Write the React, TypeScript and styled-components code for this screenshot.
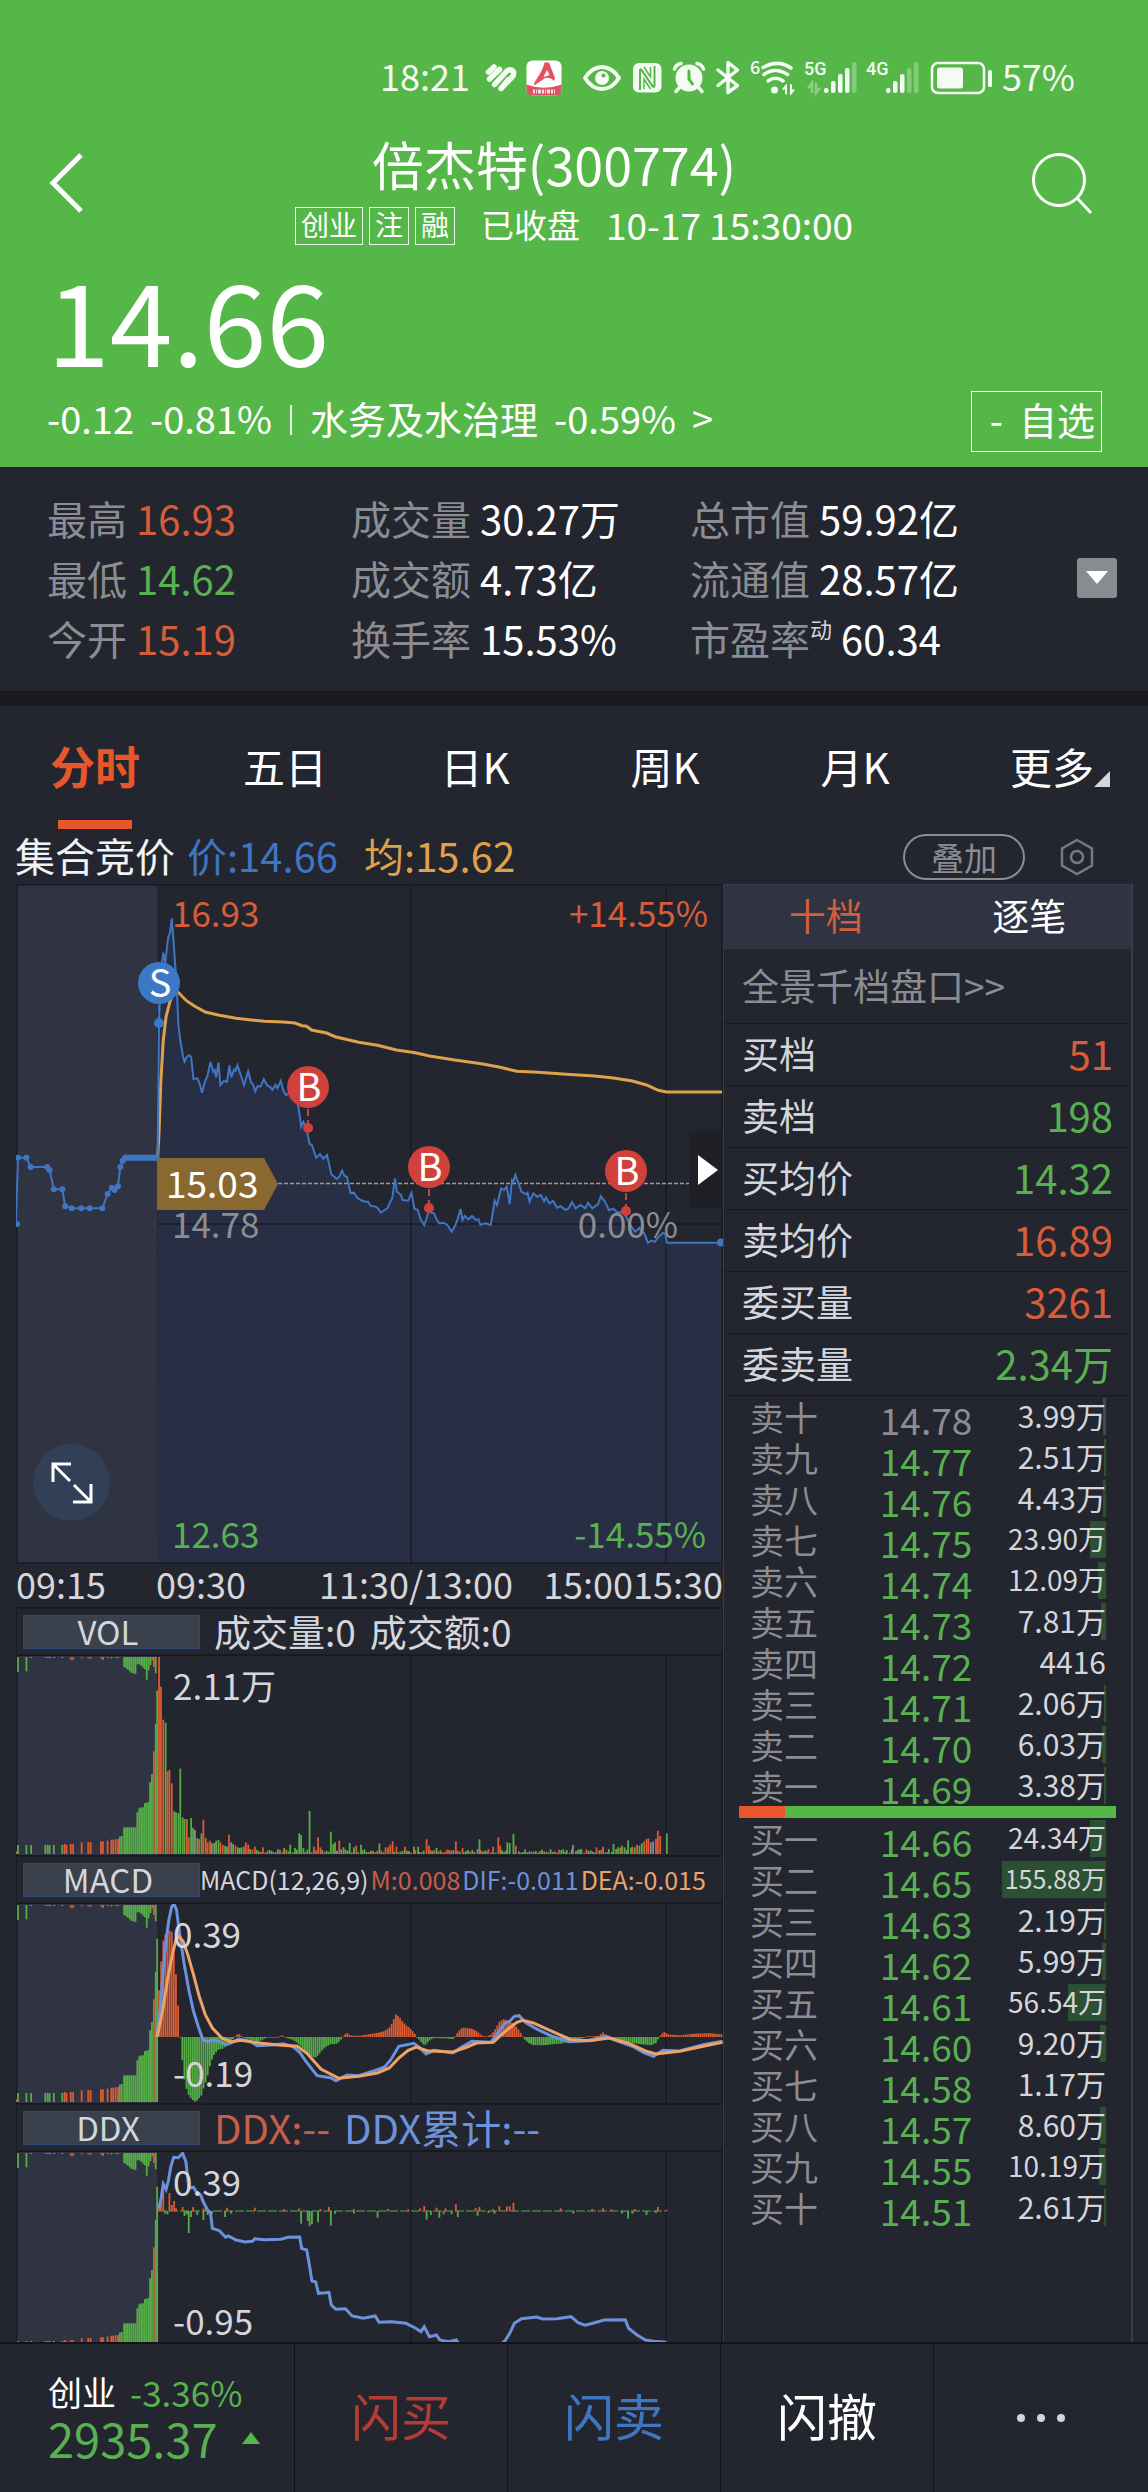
import React from "react";
import styled, { createGlobalStyle, css } from "styled-components";

const color = {
  green: "#55b748",
  page: "#23252f",
  band: "#1a1b1f",
  panel: "#303341",
  line: "#191b24",
  edge: "#3a3c49",
  up: "#d65d38",
  down: "#58b050",
  accent: "#e8572a",
  muted: "#8b8d93",
  soft: "#d4d6dc",
  blue: "#3f76c2",
  gold: "#dfa24c",
  dif: "#6c92dc",
  dea: "#eda368",
  mred: "#c45f48",
};

const font = `"Noto Sans CJK SC", "Noto Sans", sans-serif`;

const GlobalStyle = createGlobalStyle`
  * { box-sizing: border-box; }
  body { margin: 0; background: ${color.page}; color: #fff; font-family: ${font}; }
  button, table { font: inherit; color: inherit; }
  button { background: none; border: 0; padding: 0; margin: 0; cursor: pointer; }
  dl, dd, h1, p { margin: 0; font-weight: 400; }
  a { color: inherit; text-decoration: none; }
  svg { display: block; flex: none; overflow: visible; }
`;

/* ---------- header ---------- */

const Header = styled.header`
  background: ${color.green};
  padding: 60px 0 15px;
`;
const StatusBar = styled.div`
  display: flex;
  justify-content: flex-end;
  align-items: center;
  gap: 10px;
  height: 36px;
  padding-right: 73px;
  color: #f4fbf2;
`;
const StatusText = styled.span`
  padding-bottom: 6px;
  font-size: 36px;
  line-height: 30px;
`;
const IconGroup = styled.span`
  display: flex;
  gap: 8px;
  margin: 0 10px 0 4px;
`;
const NavBar = styled.div`
  display: grid;
  grid-template-columns: 76px 1fr 69px;
  align-items: start;
  margin-top: 38px;
  padding: 0 56px 0 49px;
`;
const NavTitle = styled.div`
  display: flex;
  flex-direction: column;
  align-items: center;
  gap: 13px;
`;
const Title = styled.h1`
  padding-right: 40px;
  font-size: 52px;
  line-height: 60px;
`;
const SubRow = styled.div`
  display: flex;
  align-items: flex-start;
  height: 38px;
  font-size: 33px;
  line-height: 34px;
  white-space: pre;
`;
const Tag = styled.span`
  height: 38px;
  padding: 0 5px;
  margin-right: 6px;
  border: 1px solid #eef8ec;
  font-size: 28px;
  line-height: 32px;
`;
const State = styled.span`
  margin: 0 26px 0 20px;
`;
const Stamp = styled.time`
  font-size: 37px;
`;
const NavButton = styled.button<{ $end?: boolean }>`
  margin-top: 19px;
  justify-self: ${(p) => (p.$end ? "end" : "start")};
`;
const Price = styled.p`
  margin-top: 13px;
  padding-left: 47px;
  font-size: 113px;
  line-height: 120px;
`;
const QuoteRow = styled.div`
  display: flex;
  align-items: flex-start;
  justify-content: space-between;
  margin-top: 13px;
  padding: 0 46px 0 47px;
  font-size: 38px;
  line-height: 54px;
`;
const Quote = styled.a`
  display: flex;
  gap: 16px;
`;
const Bar = styled.span`
  width: 2px;
  height: 30px;
  margin: 14px 2px 0;
  background: #e9f6e7;
`;
const FavButton = styled.button`
  display: flex;
  gap: 16px;
  height: 61px;
  padding: 0 6px 0 18px;
  border: 1px solid #fff;
  font-size: 38px;
  line-height: 54px;
`;

/* ---------- figures ---------- */

const Stats = styled.section`
  display: grid;
  grid-template-columns: 304fr 339fr 387fr 40px;
  align-items: center;
  padding: 21px 31px 23px 47px;
  font-size: 40px;
  line-height: 60px;
`;
const StatList = styled.dl`
  display: flex;
  flex-direction: column;
`;
const Stat = styled.div`
  display: flex;
  gap: 9px;
  height: 60px;
`;
const StatName = styled.dt`
  color: ${color.muted};
`;
const StatValue = styled.dd<{ $tone?: string }>`
  color: ${(p) => p.$tone ?? "#fff"};
`;
const Sup = styled.sup`
  font-size: 22px;
  line-height: 22px;
  vertical-align: 17px;
  color: ${color.soft};
`;
const ExpandButton = styled.button`
  display: grid;
  place-items: center;
  width: 40px;
  height: 40px;
  border-radius: 3px;
  background: #878d8f;
`;
const Band = styled.div`
  height: 15px;
  background: ${color.band};
`;

/* ---------- period tabs ---------- */

const Tabs = styled.nav`
  display: grid;
  grid-template-columns: repeat(6, 1fr);
  height: 123px;
  padding-right: 8px;
`;
const Tab = styled.button<{ $active?: boolean; $more?: boolean }>`
  display: grid;
  grid-template-rows: 1fr 9px;
  justify-items: center;
  align-items: center;
  padding-top: 6px;
  font-size: 42px;
  line-height: 60px;
  ${(p) => p.$more && css`padding-left: 30px;`}
  ${(p) =>
    p.$active &&
    css`
      font-size: 45px;
      font-weight: 700;
      color: ${color.accent};
      &::after {
        content: "";
        width: 74px;
        height: 9px;
        background: ${color.accent};
      }
    `}
`;
const MoreLabel = styled.span`
  display: flex;
  align-items: flex-end;
`;
const Corner = styled.svg`
  margin-bottom: 9px;
`;

const InfoRow = styled.div`
  display: flex;
  align-items: center;
  height: 55px;
  padding: 0 54px 0 15px;
`;
const InfoItem = styled.span<{ $tone?: string; $gap: number }>`
  padding-bottom: 4px;
  color: ${(p) => p.$tone ?? "#f2f3f5"};
  margin-right: ${(p) => p.$gap}px;
  font-size: 40px;
  line-height: 46px;
`;
const OverlayButton = styled.button`
  width: 122px;
  height: 46px;
  margin: 0 35px 0 auto;
  border: 2px solid ${color.muted};
  border-radius: 23px;
  color: ${color.muted};
  font-size: 33px;
  line-height: 38px;
`;

/* ---------- charts ---------- */

const Board = styled.main`
  display: grid;
  grid-template-columns: 707fr 410fr;
  padding: 0 15px 0 16px;
`;
const ChartColumn = styled.section`
  min-width: 0;
`;
const ChartBox = styled.div`
  position: relative;
`;
const Plot = styled.svg`
  width: 100%;
  height: auto;
  font-family: ${font};
  overflow: hidden;
`;
const FullButton = styled.button`
  position: absolute;
  left: 17px;
  bottom: 43px;
  display: grid;
  place-items: center;
  width: 77px;
  height: 77px;
  border-radius: 50%;
  background: #314057;
`;
const NextButton = styled.button`
  position: absolute;
  right: 0;
  top: 247px;
  display: grid;
  place-items: center;
  width: 34px;
  height: 77px;
  padding-left: 4px;
  background: #1e2026;
`;
const Axis = styled.div`
  display: grid;
  grid-template-columns: 140fr 163fr 220fr 184fr;
  height: 43px;
  color: ${color.soft};
  font-size: 36px;
  line-height: 39px;
  white-space: nowrap;
`;
const AxisEnd = styled.span`
  display: flex;
  justify-content: flex-end;
`;
const IndicatorHead = styled.div`
  display: flex;
  align-items: center;
  height: 49px;
  padding-left: 6px;
  border: solid ${color.line};
  border-width: 2px 1px;
  color: ${color.soft};
  white-space: nowrap;
`;
const IndicatorButton = styled.button`
  width: 177px;
  height: 34px;
  padding: 0 7px 2px 0;
  border: 1px solid #2f4677;
  background: #3a404c;
  color: ${color.soft};
  font-size: 33px;
  line-height: 26px;
`;
const Readout = styled.span<{ $size: number; $tone?: string; $left?: number }>`
  padding-bottom: 2px;
  font-size: ${(p) => p.$size}px;
  line-height: 38px;
  margin-left: ${(p) => p.$left ?? 0}px;
  color: ${(p) => p.$tone ?? color.soft};
`;

/* ---------- order book ---------- */

const Book = styled.aside`
  min-width: 0;
  border: solid ${color.edge};
  border-width: 1px 2px 0 1px;
`;
const BookTabs = styled.div`
  display: grid;
  grid-template-columns: 1fr 1fr;
  height: 64px;
  background: ${color.panel};
  font-size: 37px;
`;
const BookTab = styled.button<{ $active?: boolean }>`
  padding-bottom: 4px;
  color: ${(p) => (p.$active ? color.up : "#fff")};
  line-height: 60px;
`;
const DepthLink = styled.a`
  display: block;
  height: 75px;
  padding-left: 18px;
  border-bottom: 1px solid ${color.line};
  color: ${color.muted};
  font-size: 37px;
  line-height: 72px;
`;
const SummaryTable = styled.table`
  width: 100%;
  border-collapse: separate;
  border-spacing: 0;
`;
const SummaryName = styled.th`
  height: 62px;
  padding: 0 0 3px 18px;
  border-bottom: 1px solid ${color.line};
  color: ${color.soft};
  font-size: 37px;
  font-weight: 400;
  line-height: 58px;
  text-align: left;
`;
const SummaryValue = styled.td<{ $tone: string }>`
  height: 62px;
  padding: 0 18px 3px 0;
  border-bottom: 1px solid ${color.line};
  color: ${(p) => p.$tone};
  font-size: 40px;
  line-height: 58px;
  text-align: right;
`;
const LevelTable = styled.table`
  width: 100%;
  table-layout: fixed;
  border-collapse: collapse;
`;
const LevelName = styled.th`
  width: 31%;
  padding: 1px 0 0 26px;
  color: ${color.muted};
  font-size: 34px;
  font-weight: 400;
  line-height: 40px;
  text-align: left;
`;
const LevelPrice = styled.td<{ $flat?: boolean }>`
  width: 30%;
  padding: 5px 0 0;
  color: ${(p) => (p.$flat ? color.muted : color.down)};
  font-size: 37px;
  line-height: 36px;
  text-align: right;
`;
const LevelVolume = styled.td<{ $size: number }>`
  position: relative;
  padding: 0 25px 0 0;
  color: ${color.soft};
  font-size: ${(p) => p.$size}px;
  line-height: 39px;
  text-align: right;
  vertical-align: top;
`;
const VolumeText = styled.span`
  position: relative;
`;
const VolumeBar = styled.i<{ $flat?: boolean }>`
  position: absolute;
  top: 2px;
  right: 25px;
  height: 37px;
  background: ${(p) => (p.$flat ? "#454751" : "#2b5034")};
`;
const Ratio = styled.div`
  display: flex;
  height: 12px;
  margin: 0 15px;
  background: ${color.green};
`;
const RatioBuy = styled.div`
  background: ${color.accent};
`;

/* ---------- bottom bar ---------- */

const BottomBar = styled.footer`
  position: relative;
  display: grid;
  grid-template-columns: 295fr 213fr 213fr 213fr 214fr;
  height: 150px;
  margin-top: -9px;
  border-top: 2px solid #12131c;
  background: ${color.page};
`;
const IndexCell = styled.a`
  display: flex;
  flex-direction: column;
  padding: 25px 0 0 48px;
  border-right: 1px solid #12131c;
  color: ${color.down};
`;
const IndexLine = styled.span<{ $big?: boolean }>`
  display: flex;
  align-items: center;
  gap: ${(p) => (p.$big ? 24 : 14)}px;
  font-size: ${(p) => (p.$big ? 47 : 35)}px;
  line-height: 46px;
`;
const IndexName = styled.span`
  color: #fff;
  font-size: 34px;
`;
const Action = styled.button<{ $tone?: string }>`
  display: grid;
  place-items: center;
  padding-bottom: 8px;
  border-right: 1px solid #12131c;
  color: ${(p) => p.$tone ?? "#fff"};
  font-size: 50px;
  line-height: 60px;
  &:last-child { padding-bottom: 0; border-right: 0; }
`;

/* ---------- chart data ---------- */

type Pt = [number, number];
const KX = 2.119;
const KY = 3;

const project = (raw: string, top: number): Pt[] =>
  raw
    .trim()
    .split(/\s+/)
    .map((s) => {
      const [x, y] = s.split(",").map(Number);
      return [x / KX - 16, (y - top) / KY];
    });
const toPath = (pts: Pt[]) => "M" + pts.map(([x, y]) => `${x.toFixed(1)} ${y.toFixed(1)}`).join("L");
const pairs = (raw: string): Pt[] =>
  raw.trim().split(/\s+/).map((s) => s.split(",").map(Number) as Pt);

const preOpen = `38,833 56,833 65,861 100,861 105,870 114,928 132,928 138,979 152,985 172,985 190,985 217,985 228,942 237,923 243,930 250,919 255,861 260,842 265,833 275,833 285,833 295,833 305,833 315,833 325,833 332,833`;
const price = `34,1031 ${preOpen} 334,838 337,430 339,350 342,260 346,218 350,250 356,175 360,160 364,115 368,190 372,270 375,340 378,435 383,490 388,530 391,545 396,530 401,526 405,530 410,597 418,595 423,610 428,638 434,605 439,590 446,546 452,575 455,570 458,592 463,548 467,615 474,603 481,605 486,556 490,592 496,568 499,572 503,556 510,585 517,615 526,574 532,608 536,612 541,634 546,618 552,620 559,598 567,618 572,620 577,630 584,614 588,625 595,602 600,630 606,645 612,640 625,645 632,680 636,715 638,740 643,725 650,750 656,792 661,795 670,833 678,823 685,836 693,825 697,850 702,883 714,897 719,890 725,872 730,888 735,890 739,915 743,940 750,938 757,953 765,960 773,965 780,965 786,978 793,979 800,983 807,998 815,990 822,983 826,968 831,955 837,895 841,935 850,945 853,960 865,962 872,938 878,985 885,990 892,1020 899,1035 905,1010 909,985 913,998 920,1000 925,1018 931,1030 940,1028 948,1035 957,1055 965,1035 970,1015 976,987 980,1020 985,1008 993,1018 1000,1008 1008,1020 1014,1018 1018,1035 1028,1030 1040,1035 1048,962 1053,975 1062,925 1068,930 1074,920 1080,972 1085,900 1088,905 1092,885 1100,915 1105,935 1115,943 1118,938 1122,965 1130,940 1138,950 1146,945 1153,963 1157,952 1164,970 1172,963 1180,983 1188,978 1198,990 1205,985 1212,966 1220,985 1230,975 1240,985 1246,968 1255,985 1267,973 1273,948 1282,965 1290,990 1300,986 1308,998 1320,995 1327,1010 1338,1040 1346,1055 1355,1043 1365,1060 1373,1088 1380,1082 1388,1085 1396,1070 1405,1058 1410,1062 1413,1088 1530,1088`;
const average = `334,833 337,760 341,600 346,480 352,410 360,365 370,330 380,340 395,362 412,378 435,396 465,406 500,415 560,424 600,426 625,429 640,437 650,439 660,450 692,459 710,470 760,487 800,496 840,510 880,518 910,528 960,539 1020,551 1060,562 1095,574 1140,577 1200,583 1260,588 1300,594 1340,603 1370,615 1395,631 1412,636 1530,636`;
const difLine = `333,531 340,440 346,330 352,240 358,180 364,140 369,134 374,150 380,215 390,310 400,390 410,455 420,500 430,540 440,546 450,541 460,543 480,555 490,550 505,538 530,545 545,558 575,556 600,552 620,560 635,578 650,608 672,648 690,652 700,654 712,663 735,646 760,648 790,635 815,622 828,600 845,560 877,551 890,565 903,583 920,572 960,580 975,565 1000,545 1040,548 1055,520 1070,490 1080,485 1090,470 1100,468 1115,490 1140,510 1170,530 1205,546 1240,544 1285,530 1310,545 1340,560 1365,580 1385,590 1405,572 1440,574 1490,555 1531,545`;
const deaLine = `333,531 345,450 355,360 365,285 373,240 379,230 388,245 398,285 410,345 422,410 435,465 450,505 470,535 490,547 510,542 550,550 590,556 630,560 650,580 680,628 718,656 760,650 800,640 825,625 845,595 865,572 882,562 905,573 960,577 990,562 1010,550 1045,548 1070,515 1095,488 1108,482 1130,490 1170,515 1210,540 1250,543 1290,535 1330,550 1370,575 1390,583 1440,575 1490,560 1531,548`;
const ddxLine = `337,325 342,290 346,252 352,268 357,240 362,200 368,172 378,173 387,160 394,185 400,265 410,262 416,275 425,285 432,310 440,330 446,340 450,385 465,392 478,412 484,408 500,420 520,426 535,424 540,416 560,419 595,418 610,412 635,411 639,445 650,450 655,490 661,543 669,546 675,580 690,578 697,577 702,615 712,628 732,626 746,648 770,655 795,648 803,667 830,665 860,670 880,684 892,695 899,680 910,710 925,705 932,720 950,725 967,720 975,738 1058,738 1070,722 1080,700 1090,670 1105,656 1138,651 1150,657 1180,656 1210,650 1225,668 1240,676 1260,668 1280,660 1325,659 1332,685 1350,705 1368,720 1385,724 1412,727`;

/* x, height, colour key */
const auctionBars = `34,8,r 38,27,g 56,27,g 66,27,g 96,27,g 101,27,g 105,27,g 114,27,g 132,27,g 137,30,r 141,27,r 150,30,r 155,30,r 173,35,r 187,36,r 192,36,r 214,38,r 218,38,r 228,40,r 236,43,r 240,43,r 245,44,r 250,45,r 254,52,g 258,54,g 263,80,g 267,80,g 271,80,g 275,80,g 279,80,g 283,80,g 287,80,g 291,125,g 295,137,g 299,140,g 303,140,g 307,153,g 311,154,g 315,156,g 318,215,g 322,240,g 326,308,r 330,390,g 333,490,g`;
const auctionTop = `38,45,g 56,43,g 66,3,g 97,3,g 102,3,g 106,3,g 115,3,g 132,3,g 150,9,r 155,9,r 173,4,r 187,4,r 192,5,r 214,4,r 218,9,r 228,3,r 236,4,r 245,3,r 250,3,r 263,30,g 267,34,g 271,38,g 275,43,g 279,48,g 283,49,g 287,51,g 291,22,g 295,22,g 299,26,g 303,32,g 307,37,g 311,68,g 315,40,g 319,24,g 323,10,r 326,30,r 330,49,g`;
const volumeBars = `337,591,r 341,502,r 346,403,r 351,394,g 355,248,r 359,252,r 364,212,r 369,128,g 373,125,g 378,122,g 382,256,g 387,110,g 391,105,g 396,105,r 400,50,r 405,108,g 409,78,g 413,72,n 418,48,g 422,45,r 427,62,g 431,103,r 436,48,r 440,35,r 445,40,r 449,32,g 454,33,n 458,40,g 463,42,g 467,35,r 472,28,r 477,25,g 481,22,g 485,58,r 490,35,n 494,30,g 499,25,r 504,20,g 508,18,g 512,20,g 517,22,r 521,35,r 526,28,r 530,15,g 540,22,r 557,20,r 602,18,g 615,28,g 625,18,g 634,62,g 638,57,g 643,18,g 656,129,g 665,22,r 674,50,r 679,20,r 701,67,g 706,30,g 710,35,g 719,40,r 728,20,g 741,33,g 750,20,g 755,25,r 765,28,g 804,32,g 817,20,r 822,20,r 827,28,r 832,38,r 840,22,r 858,22,r 877,22,g 886,22,g 904,44,r 909,25,r 925,18,g 966,38,r 980,18,r 1012,15,n 1016,44,g 1035,15,r 1045,22,r 1056,50,r 1060,25,r 1075,35,g 1080,33,g 1088,60,g 1093,25,r 1201,12,g 1214,27,n 1232,14,n 1264,20,r 1278,22,r 1290,15,g 1300,30,g 1310,20,g 1318,25,g 1331,41,g 1340,22,r 1345,20,g 1350,28,r 1355,25,g 1360,32,g 1365,38,r 1370,45,r 1374,47,r 1379,35,n 1384,38,n 1390,45,r 1394,70,r 1399,54,r 1413,62,g`;
const macdBars = `337,140 341,220 346,290 351,310 355,315 359,320 364,315 369,270 373,185 378,80 382,-5 387,-80 391,-130 396,-160 400,-175 405,-185 413,-194 418,-190 427,-175 431,-155 436,-135 440,-115 445,-85 449,-68 454,-52 463,-38 472,-35 481,-25 490,-12 495,-5 500,5 505,10 510,6 517,-4 530,-8 548,-14 556,-8 565,-2 590,-2 595,6 600,3 608,-3 620,-8 630,-18 640,-32 650,-45 660,-58 668,-62 674,-55 682,-40 690,-30 700,-22 715,-20 722,-8 728,4 735,12 742,5 760,3 775,7 790,10 805,14 815,18 825,28 832,45 838,68 845,62 852,48 860,36 870,25 878,12 883,0 890,-10 895,-20 900,-25 905,-18 912,-8 920,-3 940,-4 960,-6 966,5 972,18 980,28 1000,25 1010,18 1020,5 1030,1 1042,8 1050,25 1058,45 1066,54 1074,50 1082,45 1090,38 1100,20 1106,5 1112,-8 1120,-18 1130,-24 1150,-25 1170,-22 1190,-20 1205,-12 1215,-8 1235,-3 1245,3 1255,2 1270,4 1278,14 1285,4 1300,-3 1320,-10 1340,-18 1360,-22 1380,-25 1390,-18 1395,-5 1400,6 1408,16 1415,8 1440,5 1470,10 1500,12 1530,8`;
const ddxBars = `337,20 341,50 346,78 359,54 364,18 369,30 373,8 387,12 409,12 431,8 436,10 481,10 540,10 602,6 634,8 679,6 697,12 750,6 822,6 865,5 890,8 899,15 925,10 944,8 966,20 1008,9 1016,12 1045,6 1058,14 1074,14 1080,14 1088,25 1188,8 1255,6 1278,8 1296,5 1345,6 1394,12 1413,4 350,-8 355,-10 391,-15 396,-10 400,-66 405,-18 418,-12 431,-27 440,-12 449,-10 477,-18 490,-8 638,-38 652,-30 656,-45 661,-40 674,-34 701,-44 710,-8 750,-8 800,-20 904,-26 913,-12 931,-20 940,-10 957,-10 970,-18 1012,-14 1035,-6 1048,-8 1215,-8 1318,-8 1331,-23 1340,-8 1370,-12 1390,-6`;

const barFill: Record<string, string> = { g: "#55ad46", r: "#dd5b31", n: "#8b8792" };

const parseBars = (raw: string) =>
  raw.split(/\s+/).map((s) => {
    const [x, h, k] = s.split(",");
    return { x: Number(x), h: Number(h), k };
  });

/* Quiet minutes between the busy ones carry only a few lots. */
const quietMinutes = () => {
  const busy = parseBars(volumeBars);
  const out: { x: number; h: number; k: string }[] = [];
  let seed = 7;
  for (let x = 535; x < 1400; x += 4.48) {
    if (busy.some((b) => Math.abs(b.x - x) < 2.3)) continue;
    seed = (seed * 137 + 59) % 1009;
    const late = x > 1300 ? 6 : 0;
    out.push({ x, h: 4 + (seed % 11) + late, k: seed % 7 === 0 ? "n" : seed % 3 === 0 ? "r" : "g" });
  }
  return out;
};

const interpolate = (raw: string): Pt[] => {
  const pts = pairs(raw);
  const out: Pt[] = [];
  for (let x = 337; x <= 1531; x += 4.48) {
    const i = pts.findIndex((p) => p[0] >= x);
    if (i < 0) break;
    const b = pts[i];
    const a = pts[Math.max(0, i - 1)];
    const t = b[0] === a[0] ? 0 : (x - a[0]) / (b[0] - a[0]);
    out.push([x, a[1] + (b[1] - a[1]) * t]);
  }
  return out;
};

const Bars = ({ items, base, down }: { items: { x: number; h: number; k: string }[]; base: number; down?: boolean }) => (
  <g>
    {items.map((b, i) => (
      <rect
        key={i}
        x={b.x / KX - 16 - 0.9}
        y={down ? base : base - b.h / KY}
        width="1.8"
        height={b.h / KY}
        fill={barFill[b.k]}
      />
    ))}
  </g>
);

const SignedBars = ({ items, base }: { items: Pt[]; base: number }) => (
  <g>
    {items.map(([x, h], i) => (
      <rect
        key={i}
        x={x / KX - 16 - 0.9}
        y={h > 0 ? base - h / KY : base}
        width="1.8"
        height={Math.max(0.7, Math.abs(h) / KY)}
        fill={h > 0 ? barFill.r : barFill.g}
      />
    ))}
  </g>
);

const Grid = ({ height }: { height: number }) => (
  <g stroke={color.line} strokeWidth="1.5">
    <path d={`M395 0V${height}M650 0V${height}M.7 0V${height}M706.3 0V${height}`} />
  </g>
);

const Marker = ({ x, y, dot, letter, fill }: { x: number; y: number; dot: number; letter: string; fill: string }) => (
  <g fill={fill}>
    <path d={`M${x} ${y}V${dot}`} stroke={fill} strokeWidth="2" strokeDasharray="7 4" />
    <circle cx={x} cy={dot} r="5" />
    <circle cx={x} cy={y} r="21" />
    <text x={x + 1} y={y + 14} fill="#fff" fontSize="38" textAnchor="middle">{letter}</text>
  </g>
);

const PriceChart = () => {
  const line = project(price, 12);
  const session = line.slice(line.findIndex(([x]) => x > 141));
  return (
    <Plot viewBox="0 0 707 680" role="img" aria-label="分时走势">
      <rect width="141" height="679" fill={color.panel} />
      <path d={`${toPath(session)}V679H141Z`} fill="#282e44" />
      <Grid height={680} />
      <path d="M0 .7H707M0 679H707M141 340H707" stroke={color.line} strokeWidth="1.5" />
      <path d="M262 299.5H707" stroke="#a39a90" strokeWidth="1.5" strokeDasharray="4 2" />
      <path d={toPath(project(average, 12))} fill="none" stroke={color.gold} strokeWidth="3" />
      <path d={toPath(line)} fill="none" stroke={color.blue} strokeWidth="2" />
      <path d="M109 273.7H141" stroke={color.blue} strokeWidth="6" />
      {project(preOpen, 12).map(([x, y], i) => (
        <circle key={i} cx={x} cy={y} r="3" fill={color.blue} />
      ))}
      <circle cx="1" cy="340" r="3" fill={color.blue} />
      <circle cx="705" cy="358.5" r="4" fill={color.blue} />
      <path d="M141 274H248L262 300L248 326H141Z" fill="#8a6930" />
      <g fontSize="35">
        <text x="156" y="43" fill={color.up}>16.93</text>
        <text x="692" y="43" fill={color.up} textAnchor="end">+14.55%</text>
        <text x="156" y="354" fill={color.muted}>14.78</text>
        <text x="662" y="354" fill={color.muted} textAnchor="end">0.00%</text>
        <text x="156" y="664" fill={color.down}>12.63</text>
        <text x="690" y="664" fill={color.down} textAnchor="end">-14.55%</text>
        <text x="150" y="314" fill="#fff" fontSize="37">15.03</text>
      </g>
      <Marker x={143} y={99} dot={139} letter="S" fill="#3b78c6" />
      <Marker x={292} y={203} dot={244} letter="B" fill="#d1413b" />
      <Marker x={413} y={283} dot={324} letter="B" fill="#d1413b" />
      <Marker x={610} y={287} dot={327} letter="B" fill="#d1413b" />
    </Plot>
  );
};

const IndicatorPlot = ({ label, high, low, children }: { label: string; high: string; low?: string; children: React.ReactNode }) => (
  <Plot viewBox="0 0 707 199" role="img" aria-label={label}>
    <rect width="141" height="199" fill={color.panel} />
    <Grid height={199} />
    <Bars items={parseBars(auctionBars)} base={198} />
    <Bars items={parseBars(auctionTop)} base={1} down />
    {children}
    <g fontSize="35" fill={color.soft}>
      <text x="157" y="44">{high}</text>
      {low && <text x="157" y="183">{low}</text>}
    </g>
  </Plot>
);

/* ---------- status icons ---------- */

const HeartIcon = () => (
  <svg width="34" height="36" viewBox="0 0 34 36" fill="none" stroke="#f4fbf2" strokeWidth="5.500" strokeLinecap="round">
    <path d="M4.500 12L10 7" />
    <path d="M5.500 19L15.500 9.500" />
    <path d="M10.500 24.500L22.500 11.500C27 7 32 12 28.500 16.500L17 28.500L24 20" strokeLinejoin="round" />
  </svg>
);
const AppIcon = () => (
  <svg width="36" height="36" viewBox="0 0 36 36">
    <rect x=".5" y=".5" width="35" height="35" rx="6" fill="#fff" />
    <path d="M.5 24.500Q18 31 35.500 24.500V29.500Q35.500 35.500 29.500 35.500H6.500Q.5 35.500 .5 29.500Z" fill="#e05361" />
    <path d="M18.500 2.500H23L29 18L28 21C24 17 20 17 17 19.500L8 25.500C7 22 16 14 18.500 2.500Z" fill="#e4525e" />
    <path d="M21 10L23.500 15L17.500 17Z" fill="#fff" />
    <path d="M7 31.500H29" stroke="#fff" strokeWidth="4" strokeDasharray="2 1 1 1 3 1" opacity=".8" />
  </svg>
);
const EyeIcon = () => (
  <svg width="40" height="36" viewBox="0 0 40 36" fill="none" stroke="#f4fbf2" strokeWidth="4">
    <path d="M3 18Q10 7 20 7T37 18Q30 29 20 29T3 18Z" strokeLinejoin="round" />
    <circle cx="20" cy="18" r="7" fill="#f4fbf2" stroke="none" />
    <circle cx="21.500" cy="15.500" r="2" fill={color.green} stroke="none" />
  </svg>
);
const NfcIcon = () => (
  <svg width="30" height="36" viewBox="0 0 30 36">
    <rect x="1" y="3" width="28.500" height="29.500" rx="6" fill="#f4fbf2" />
    <path d="M8 30V10.500Q8 8.500 9.500 10L20.500 26Q22.500 28 22.500 25.500V6" fill="none" stroke={color.green} strokeWidth="2" />
    <path d="M12 7L18.500 17V7M12 29V19L18.500 29" fill="none" stroke={color.green} strokeWidth="1.500" />
  </svg>
);
const AlarmIcon = () => (
  <svg width="34" height="36" viewBox="0 0 34 36" fill="none" stroke="#f4fbf2" strokeLinecap="round">
    <circle cx="17" cy="18" r="13.500" fill="#f4fbf2" stroke="none" />
    <path d="M2.500 9Q4 4.500 9 3.500M31.500 9Q30 4.500 25 3.500M7 28L4 31.500M27 28L30 31.500" strokeWidth="3.500" />
    <path d="M17 11V19L20.500 24" stroke={color.green} strokeWidth="3" />
  </svg>
);
const BluetoothIcon = () => (
  <svg width="24" height="36" viewBox="0 0 24 36" fill="none" stroke="#f4fbf2" strokeWidth="3.500" strokeLinejoin="round" strokeLinecap="round">
    <path d="M2 10L21.500 25.500L12 32.500V2.500L21.500 10L2 25.500" />
  </svg>
);
const WifiIcon = () => (
  <svg width="46" height="36" viewBox="0 0 46 36" fill="none" stroke="#f4fbf2" strokeWidth="3.500" strokeLinecap="round">
    <text x="0" y="14" fontSize="18" fontWeight="500" fill="#f4fbf2" stroke="none">6</text>
    <path d="M13 7.500Q28 -1 41 8M14 14.500Q25 6.500 37.500 14.500M18 21Q25.500 15.500 33 21" />
    <circle cx="24.500" cy="30" r="3.500" fill="#f4fbf2" stroke="none" />
    <path d="M36 33.500V26L33.500 29M41 25V33L43.500 30" strokeWidth="2" />
  </svg>
);
const SignalIcon = ({ label, level, arrows }: { label: string; level: number; arrows?: boolean }) => (
  <svg width="52" height="36" viewBox="0 0 52 36">
    <text x="-2" y="15" fontSize="18" fontWeight="500" fill="#f4fbf2" fontFamily="Roboto">{label}</text>
    {arrows && <path d="M6 33V23L2 28M10 23V33L14 28" fill="none" stroke="#8fd085" strokeWidth="2.500" />}
    {[5, 12, 19, 25, 31].map((h, i) => (
      <rect key={h} x={18 + i * 7} y={33 - h} width="4.500" height={h} rx="2" fill={i < level ? "#f4fbf2" : "#85cb7a"} />
    ))}
  </svg>
);
const BatteryIcon = () => (
  <svg width="62" height="36" viewBox="0 0 62 36" fill="none">
    <rect x="2" y="3" width="52" height="30" rx="6" stroke="#f4fbf2" strokeWidth="2.500" />
    <rect x="7" y="7.500" width="26" height="21" rx="2.500" fill="#f4fbf2" />
    <rect x="58" y="10" width="4" height="17" rx="1.500" fill="#f4fbf2" />
  </svg>
);

/* ---------- tables ---------- */

const stats = [
  [
    { name: "最高", value: "16.93", tone: color.up },
    { name: "最低", value: "14.62", tone: color.down },
    { name: "今开", value: "15.19", tone: color.up },
  ],
  [
    { name: "成交量", value: "30.27万" },
    { name: "成交额", value: "4.73亿" },
    { name: "换手率", value: "15.53%" },
  ],
  [
    { name: "总市值", value: "59.92亿" },
    { name: "流通值", value: "28.57亿" },
    { name: "市盈率", sup: "动", value: "60.34" },
  ],
] as { name: string; value: string; tone?: string; sup?: string }[][];

const summary: [string, string, string][] = [
  ["买档", "51", color.up],
  ["卖档", "198", color.down],
  ["买均价", "14.32", color.down],
  ["卖均价", "16.89", color.up],
  ["委买量", "3261", color.up],
  ["委卖量", "2.34万", color.down],
];

type Level = [string, string, string];
const asks: Level[] = [
  ["卖十", "14.78", "3.99万"],
  ["卖九", "14.77", "2.51万"],
  ["卖八", "14.76", "4.43万"],
  ["卖七", "14.75", "23.90万"],
  ["卖六", "14.74", "12.09万"],
  ["卖五", "14.73", "7.81万"],
  ["卖四", "14.72", "4416"],
  ["卖三", "14.71", "2.06万"],
  ["卖二", "14.70", "6.03万"],
  ["卖一", "14.69", "3.38万"],
];
const bids: Level[] = [
  ["买一", "14.66", "24.34万"],
  ["买二", "14.65", "155.88万"],
  ["买三", "14.63", "2.19万"],
  ["买四", "14.62", "5.99万"],
  ["买五", "14.61", "56.54万"],
  ["买六", "14.60", "9.20万"],
  ["买七", "14.58", "1.17万"],
  ["买八", "14.57", "8.60万"],
  ["买九", "14.55", "10.19万"],
  ["买十", "14.51", "2.61万"],
];

const volumeSize = (v: string) => (v.length > 6 ? 25 : v.length > 5 ? 28 : 30);
const barWidth = (v: string) => {
  const lots = v.endsWith("万") ? parseFloat(v) : Number(v) / 10000;
  return lots < 1.5 ? 0 : Math.max(2, Math.round((lots / 155.88) * 104));
};

const Levels = ({ rows, label }: { rows: Level[]; label: string }) => (
  <LevelTable aria-label={label}>
    <tbody>
      {rows.map(([name, p, v]) => (
        <tr key={name}>
          <LevelName scope="row">{name}</LevelName>
          <LevelPrice $flat={p === "14.78"}>{p}</LevelPrice>
          <LevelVolume $size={volumeSize(v)}>
            <VolumeBar $flat={p === "14.78"} style={{ width: barWidth(v) }} />
            <VolumeText>{v}</VolumeText>
          </LevelVolume>
        </tr>
      ))}
    </tbody>
  </LevelTable>
);

export default function App() {
  return (
    <>
      <GlobalStyle />
      <Header>
        <StatusBar>
          <StatusText>18:21</StatusText>
          <IconGroup>
            <HeartIcon />
            <AppIcon />
          </IconGroup>
          <EyeIcon />
          <NfcIcon />
          <AlarmIcon />
          <BluetoothIcon />
          <WifiIcon />
          <SignalIcon label="5G" level={4} arrows />
          <SignalIcon label="4G" level={3} />
          <BatteryIcon />
          <StatusText>57%</StatusText>
        </StatusBar>
        <NavBar>
          <NavButton aria-label="返回">
            <svg width="34" height="60" viewBox="0 0 34 60" fill="none" stroke="#fff" strokeWidth="5">
              <path d="M32 2L4 30L32 58" />
            </svg>
          </NavButton>
          <NavTitle>
            <Title>倍杰特(300774)</Title>
            <SubRow>
              <Tag>创业</Tag>
              <Tag>注</Tag>
              <Tag>融</Tag>
              <State>已收盘</State>
              <Stamp>10-17 15:30:00</Stamp>
            </SubRow>
          </NavTitle>
          <NavButton $end aria-label="搜索">
            <svg width="60" height="62" viewBox="0 0 60 62" fill="none" stroke="#fff" strokeWidth="3">
              <circle cx="27" cy="27" r="25.500" />
              <path d="M45 45L59 60" />
            </svg>
          </NavButton>
        </NavBar>
        <Price>14.66</Price>
        <QuoteRow>
          <Quote href="#sector">
            <span>-0.12</span>
            <span>-0.81%</span>
            <Bar />
            <span>水务及水治理</span>
            <span>-0.59%</span>
            <span>&gt;</span>
          </Quote>
          <FavButton>
            <span>-</span>
            <span>自选</span>
          </FavButton>
        </QuoteRow>
      </Header>

      <Stats>
        {stats.map((col, i) => (
          <StatList key={i}>
            {col.map((s) => (
              <Stat key={s.name}>
                <StatName>
                  {s.name}
                  {s.sup && <Sup>{s.sup}</Sup>}
                </StatName>
                <StatValue $tone={s.tone}>{s.value}</StatValue>
              </Stat>
            ))}
          </StatList>
        ))}
        <ExpandButton aria-label="展开">
          <svg width="22" height="14" viewBox="0 0 22 14">
            <path d="M0 0H22L11 13Z" fill="#fff" />
          </svg>
        </ExpandButton>
      </Stats>
      <Band />

      <Tabs>
        <Tab $active>分时</Tab>
        <Tab>五日</Tab>
        <Tab>日K</Tab>
        <Tab>周K</Tab>
        <Tab>月K</Tab>
        <Tab $more>
          <MoreLabel>
            更多
            <Corner width="16" height="16" viewBox="0 0 16 16">
              <path d="M16 0V16H0Z" fill={color.soft} />
            </Corner>
          </MoreLabel>
        </Tab>
      </Tabs>

      <InfoRow>
        <InfoItem $gap={12}>集合竞价</InfoItem>
        <InfoItem $tone={color.blue} $gap={26}>价:14.66</InfoItem>
        <InfoItem $tone={color.gold} $gap={0}>均:15.62</InfoItem>
        <OverlayButton>叠加</OverlayButton>
        <button aria-label="设置">
          <svg width="34" height="38" viewBox="0 0 34 38" fill="none" stroke="#777a81" strokeWidth="2.500">
            <path d="M17 2L32 10.500V27.500L17 36L2 27.500V10.500Z" />
            <circle cx="17" cy="19" r="6" />
          </svg>
        </button>
      </InfoRow>

      <Board>
        <ChartColumn>
          <ChartBox>
            <PriceChart />
            <NextButton aria-label="收起盘口">
              <svg width="20" height="30" viewBox="0 0 20 30">
                <path d="M0 0L20 15L0 30Z" fill="#fff" />
              </svg>
            </NextButton>
            <FullButton aria-label="全屏">
              <svg width="42" height="42" viewBox="0 0 42 42" fill="none" stroke="#fff" strokeWidth="3">
                <path d="M2 20V2H20M3 3L19 19M40 22V40H22M39 39L23 23" />
              </svg>
            </FullButton>
          </ChartBox>
          <Axis>
            <span>09:15</span>
            <span>09:30</span>
            <span>11:30/13:00</span>
            <AxisEnd>
              <span>15:00</span>
              <span>15:30</span>
            </AxisEnd>
          </Axis>

          <IndicatorHead>
            <IndicatorButton>VOL</IndicatorButton>
            <Readout $size={37} $left={14}>成交量:0</Readout>
            <Readout $size={37} $left={14}>成交额:0</Readout>
          </IndicatorHead>
          <IndicatorPlot label="VOL" high="2.11万">
            <Bars items={[...parseBars(volumeBars), ...quietMinutes()]} base={198} />
          </IndicatorPlot>

          <IndicatorHead>
            <IndicatorButton>MACD</IndicatorButton>
            <Readout $size={25}>MACD(12,26,9)</Readout>
            <Readout $size={25} $left={2} $tone={color.mred}>M:0.008</Readout>
            <Readout $size={25} $left={2} $tone={color.dif}>DIF:-0.011</Readout>
            <Readout $size={25} $left={2} $tone={color.dea}>DEA:-0.015</Readout>
          </IndicatorHead>
          <IndicatorPlot label="MACD" high="0.39" low="-0.19">
            <SignedBars items={interpolate(macdBars)} base={133} />
            <path d={toPath(project(difLine, 133))} fill="none" stroke={color.dif} strokeWidth="3" />
            <path d={toPath(project(deaLine, 133))} fill="none" stroke={color.dea} strokeWidth="3" />
          </IndicatorPlot>

          <IndicatorHead>
            <IndicatorButton>DDX</IndicatorButton>
            <Readout $size={40} $left={14} $tone={color.mred}>DDX:--</Readout>
            <Readout $size={40} $left={14} $tone={color.dif}>DDX累计:--</Readout>
          </IndicatorHead>
          <IndicatorPlot label="DDX" high="0.39" low="-0.95">
            <path d="M142 59H650" stroke={barFill.g} strokeWidth="1" strokeDasharray="9 2" />
            <SignedBars items={pairs(ddxBars)} base={59} />
            <path d={toPath(project(ddxLine, 156))} fill="none" stroke={color.dif} strokeWidth="3" />
          </IndicatorPlot>
        </ChartColumn>

        <Book>
          <BookTabs>
            <BookTab $active>十档</BookTab>
            <BookTab>逐笔</BookTab>
          </BookTabs>
          <DepthLink href="#depth">全景千档盘口&gt;&gt;</DepthLink>
          <SummaryTable>
            <tbody>
              {summary.map(([name, value, tone]) => (
                <tr key={name}>
                  <SummaryName scope="row">{name}</SummaryName>
                  <SummaryValue $tone={tone}>{value}</SummaryValue>
                </tr>
              ))}
            </tbody>
          </SummaryTable>
          <Levels rows={asks} label="卖盘" />
          <Ratio>
            <RatioBuy style={{ width: `${(3261 / (3261 + 23400)) * 100}%` }} />
          </Ratio>
          <Levels rows={bids} label="买盘" />
        </Book>
      </Board>

      <BottomBar>
        <IndexCell href="#index">
          <IndexLine>
            <IndexName>创业</IndexName>
            <span>-3.36%</span>
          </IndexLine>
          <IndexLine $big>
            <span>2935.37</span>
            <svg width="18" height="12" viewBox="0 0 18 12">
              <path d="M9 0L18 12H0Z" fill={color.green} />
            </svg>
          </IndexLine>
        </IndexCell>
        <Action $tone="#b53c35">闪买</Action>
        <Action $tone={color.blue}>闪卖</Action>
        <Action>闪撤</Action>
        <Action aria-label="更多操作">
          <svg width="48" height="8" viewBox="0 0 48 8" fill={color.soft}>
            <circle cx="4" cy="4" r="4" />
            <circle cx="24" cy="4" r="4" />
            <circle cx="44" cy="4" r="4" />
          </svg>
        </Action>
      </BottomBar>
    </>
  );
}
